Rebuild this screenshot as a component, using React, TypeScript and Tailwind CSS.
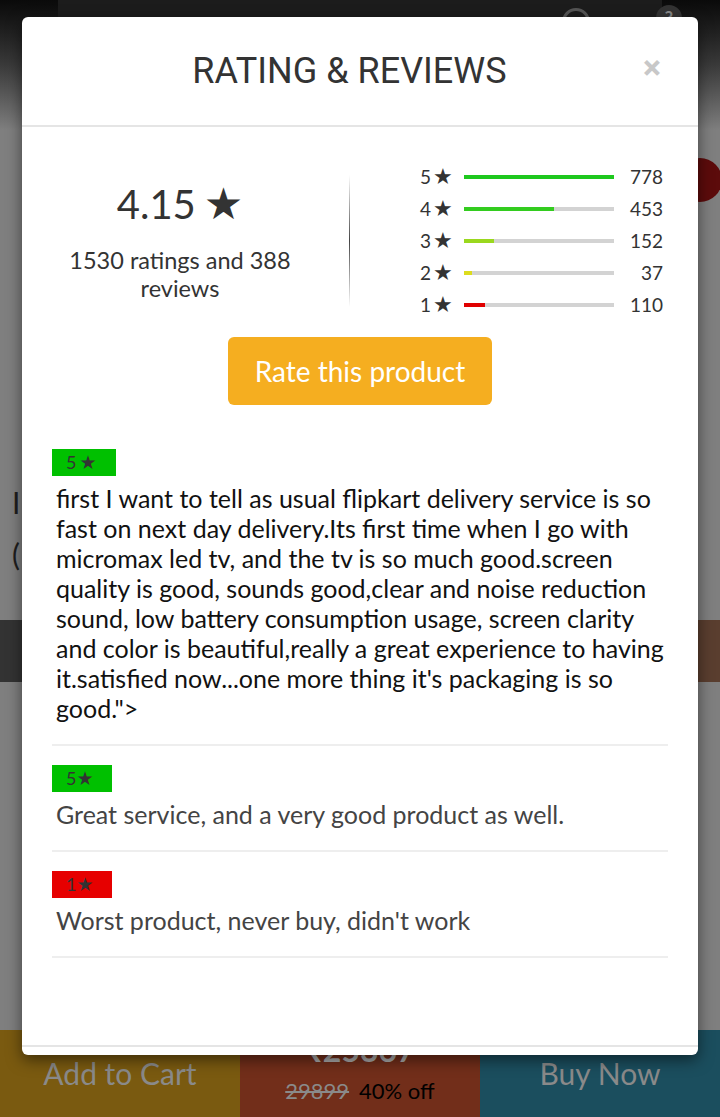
import React from "react";

const bars = [
  { n: 5, count: 778, pct: 100, color: "bg-[#1ec81e]" },
  { n: 4, count: 453, pct: 60, color: "bg-[#33cc1f]" },
  { n: 3, count: 152, pct: 20, color: "bg-[#9ad81e]" },
  { n: 2, count: 37, pct: 5, color: "bg-[#dcdc1e]" },
  { n: 1, count: 110, pct: 14, color: "bg-[#e00000]" },
];

const reviews = [
  {
    stars: "5",
    badge: "bg-[#00c000] w-[64px]",
    text: "first I want to tell as usual flipkart delivery service is so fast on next day delivery.Its first time when I go with micromax led tv, and the tv is so much good.screen quality is good, sounds good,clear and noise reduction sound, low battery consumption usage, screen clarity and color is beautiful,really a great experience to having it.satisfied now...one more thing it's packaging is so good.\">",
    dark: true,
  },
  { stars: "5", badge: "bg-[#00c000] w-[60px]", text: "Great service, and a very good product as well.", dark: false },
  { stars: "1", badge: "bg-[#e60000] w-[60px]", text: "Worst product, never buy, didn't work", dark: false },
];

export default function App() {
  return (
    <div className="relative w-[720px] h-[1117px] overflow-hidden bg-[#7f7f7f] font-['Lato',sans-serif]">
      {/* product page behind the overlay */}
      <div className="flex flex-col h-full">
        <div className="relative h-[130px] bg-gradient-to-b from-[#0a0a0a] via-[#3a3a3a] to-[#7f7f7f]">
          <div className="mx-[58px] h-[18px] bg-[#1c1c1c]" />
          <div className="absolute left-[562px] top-[8px] w-[28px] h-[28px] rounded-full border-[3px] border-[#555]" />
          <div className="absolute left-[656px] top-[5px] w-[26px] h-[26px] rounded-full bg-[#333] text-[#888] text-[18px] font-bold flex items-center justify-center">?</div>
        </div>
        <div className="h-[490px] pl-[12px] pt-[352px] text-[#1e1e1e]">
          <div className="text-[30px] leading-[40px]">I</div>
          <div className="text-[30px] leading-[40px] mt-[12px]">(</div>
        </div>
        <div className="h-[62px] flex">
          <div className="flex-1 bg-[#333333]" />
          <div className="flex-1 bg-[#5a3e2f]" />
        </div>
        <div className="flex-1" />
        <div className="h-[87px] grid grid-cols-3">
          <div className="bg-[#7a5a10] flex items-center justify-center text-[#8a8a8a] text-[30px]">Add to Cart</div>
          <div className="bg-[#722e1a] flex flex-col items-center">
            <div className="text-[#aaaaaa] text-[32px] font-bold leading-[40px]">₹25367</div>
            <div className="text-[22px] leading-[30px] mt-[6px]">
              <span className="text-[#8a8a8a] line-through">29899</span>
              <span className="text-black ml-[10px]">40% off</span>
            </div>
          </div>
          <div className="bg-[#1b4e5e] flex items-center justify-center text-[#8a8a8a] text-[30px]">Buy Now</div>
        </div>
      </div>
      <div className="absolute left-[678px] top-[158px] w-[44px] h-[44px] rounded-full bg-[#5c0b0b]" />

      {/* modal */}
      <div className="absolute left-[22px] top-[17px] w-[676px] h-[1038px] bg-white rounded-[6px] shadow-[0_5px_15px_rgba(0,0,0,0.5)] flex flex-col overflow-hidden">
        <div className="relative h-[110px] shrink-0 border-b-2 border-[#e5e5e5] flex items-center justify-center pr-[21px]">
          <h1 className="font-['Roboto',sans-serif] text-[36px] text-[#333333]">RATING &amp; REVIEWS</h1>
          <span className="absolute right-[37px] top-[25px] text-[34px] font-bold text-[#c8c8c8] font-['Roboto',sans-serif]">×</span>
        </div>

        <div className="flex-1 px-[30px]">
          <div className="flex items-center pt-[34px]">
            <div className="w-[256px] flex flex-col items-center text-center text-[#333333]">
              <div className="text-[40px] leading-[48px] flex items-center">
                <span>4.15</span>
                <span className="ml-[8px] text-[44px] font-['DejaVu_Sans',sans-serif]">★</span>
              </div>
              <div className="mt-[18px] text-[23.5px] leading-[28px] w-[240px]">1530 ratings and 388 reviews</div>
            </div>
            <div className="ml-[41px] w-px h-[132px] bg-gradient-to-b from-transparent via-[#444] to-transparent" />
            <div className="ml-[70px] flex flex-col">
              {bars.map((b) => (
                <div key={b.n} className="h-[32px] flex items-center text-[#333333]">
                  <span className="w-[34px] flex items-center text-[19px]">
                    {b.n}
                    <span className="ml-[2px] text-[22px] font-['DejaVu_Sans',sans-serif] leading-none">★</span>
                  </span>
                  <div className="ml-[10px] w-[150px] h-[4px] bg-[#d3d3d3]">
                    <div className={`h-full ${b.color}`} style={{ width: `${b.pct}%` }} />
                  </div>
                  <span className="w-[49px] text-right text-[19px]">{b.count}</span>
                </div>
              ))}
            </div>
          </div>

          <div className="flex justify-center mt-[16px]">
            <button className="w-[264px] h-[68px] rounded-[6px] bg-[#f5ae20] text-white text-[28px]">Rate this product</button>
          </div>

          <div className="mt-[25px]">
            {reviews.map((r, i) => (
              <div key={i} className="pt-[19px] pb-[21px] border-b-2 border-[#eeeeee]">
                <div className={`${r.badge} h-[27px] flex items-center pl-[14px] text-[18px] text-[#333333]`}>
                  {r.stars}
                  <span className={`${i === 0 ? "ml-[3px]" : "ml-0"} text-[19px] font-['DejaVu_Sans',sans-serif] leading-none`}>★</span>
                </div>
                <p className={`mt-[7px] pl-[4px] text-[25px] leading-[30px] ${r.dark ? "text-[#111111]" : "text-[#444444]"}`}>{r.text}</p>
              </div>
            ))}
          </div>
        </div>
        <div className="h-[10px] shrink-0 border-t-2 border-[#e5e5e5]" />
      </div>
    </div>
  );
}
